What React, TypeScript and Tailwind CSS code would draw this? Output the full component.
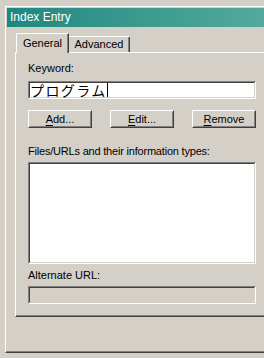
import React from 'react';

// sunken field: grey/dark on top-left, white/face on bottom-right
const Inset = ({ className = '', inner = '', children }: { className?: string; inner?: string; children?: React.ReactNode }) => (
  <div className={`border border-t-[#808080] border-l-[#808080] border-r-white border-b-white ${className}`}>
    <div className={`h-full border border-t-[#404040] border-l-[#404040] border-r-[#d4d0c8] border-b-[#d4d0c8] ${inner}`}>
      {children}
    </div>
  </div>
);

const Btn = ({ hot, rest }: { hot: string; rest: string }) => (
  <button className="w-[64px] h-[18px] border border-t-white border-l-white border-r-[#404040] border-b-[#404040] bg-[#d4d0c8]">
    <div className="h-full border border-t-[#d4d0c8] border-l-[#d4d0c8] border-r-[#808080] border-b-[#808080] flex items-center justify-center text-[11px] leading-[13px] text-black">
      <span className="underline underline-offset-[2px]">{hot}</span>
      {rest}
    </div>
  </button>
);

export default function App() {
  return (
    <div className="w-[264px] h-[358px] overflow-hidden bg-[#d4d0c8] pl-[5px] pt-[6px] font-['Liberation_Sans','Noto_Sans_CJK_JP',sans-serif] text-black">
      {/* window frame */}
      <div className="w-[290px] h-[347px] border-l border-t border-b border-l-white border-t-white border-b-[#404040] shadow-[inset_0_-1px_0_#808080] pl-[1px] pt-[1px] flex flex-col">
        {/* title bar */}
        <div className="h-[19px] bg-gradient-to-r from-[#1c8880] to-[#58ae9f] flex items-center pl-[3px] text-white text-[12px] leading-[15px]">
          Index Entry
        </div>

        {/* tabs */}
        <div className="mt-[6px] ml-[9px] h-[19px] flex items-end">
          <div className="relative z-10 -mb-px h-[20px] w-[53px] bg-[#d4d0c8] border-l border-t border-r border-l-white border-t-white border-r-[#404040] shadow-[inset_-1px_0_0_#808080] rounded-tl-[2px] flex justify-center pt-[3px] text-[11px] leading-[13px]">
            General
          </div>
          <div className="h-[16px] w-[61px] border-t border-r border-t-white border-r-[#404040] shadow-[inset_-1px_0_0_#808080] rounded-tr-[2px] flex justify-center pt-[1px] text-[11px] leading-[13px]">
            Advanced
          </div>
        </div>

        {/* tab page */}
        <div className="ml-[8px] w-[256px] h-[265px] border-l border-t border-b border-l-white border-t-white border-b-[#404040] shadow-[inset_0_-1px_0_#808080] pl-[12px] pt-[9px] flex flex-col">
          <div className="text-[11px] leading-[13px]">Keyword:</div>
          <Inset className="mt-[6px] w-[228px] h-[18px]" inner="bg-white flex items-center">
            <span className="text-[14px] leading-[14px] tracking-[1.4px] font-['Noto_Sans_CJK_JP',sans-serif]">プログラム</span>
            <span className="w-px h-[14px] bg-black" />
          </Inset>

          <div className="mt-[11px] w-[228px] flex justify-between">
            <Btn hot="A" rest="dd..." />
            <Btn hot="E" rest="dit..." />
            <Btn hot="R" rest="emove" />
          </div>

          <div className="mt-[17px] text-[11px] leading-[13px] tracking-[-0.2px]">
            Files/URLs and their information types:
          </div>
          <Inset className="mt-[4px] w-[228px] h-[102px]" inner="bg-white" />

          <div className="mt-[5px] text-[11px] leading-[13px]">Alternate URL:</div>
          <Inset className="mt-[4px] w-[228px] h-[18px]" inner="bg-[#d4d0c8]" />
        </div>
      </div>
    </div>
  );
}
